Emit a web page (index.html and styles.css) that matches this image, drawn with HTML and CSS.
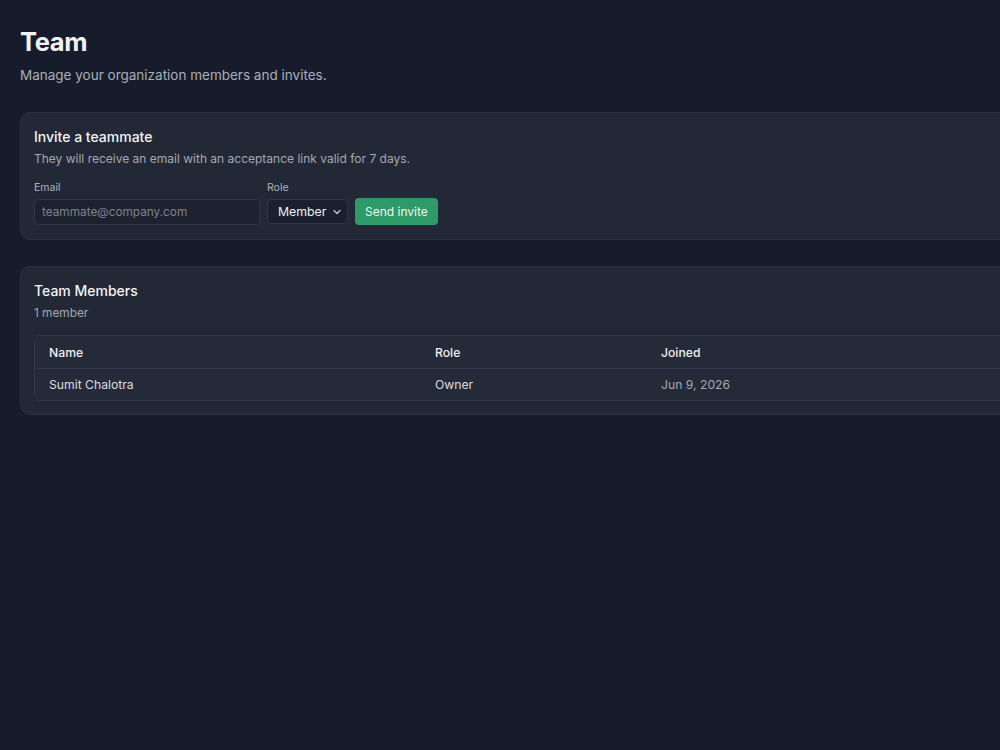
FILE: index.html
```html
<!DOCTYPE html>
<html lang="en">
<head>
  <meta charset="UTF-8" />
  <meta name="viewport" content="width=device-width, initial-scale=1" />
  <title>Team</title>
  <link rel="stylesheet" href="styles.css">
</head>
<body>
  <div class="page">
    <h1>Team</h1>
    <p class="subtitle">Manage your organization members and invites.</p>

    <section class="card">
      <h3>Invite a teammate</h3>
      <p class="muted">They will receive an email with an acceptance link valid for 7 days.</p>
      <form class="invite-form">
        <div class="field field-email">
          <label>Email</label>
          <input type="email" name="email" placeholder="teammate@company.com" />
        </div>
        <div class="field">
          <label>Role</label>
          <div class="select">
            <span>Member</span>
            <svg width="10" height="10" viewBox="0 0 10 10"><path d="M2 3.5 L5 6.5 L8 3.5" fill="none" stroke="#c7ccd4" stroke-width="1.2" stroke-linecap="round" stroke-linejoin="round"/></svg>
          </div>
        </div>
        <button type="submit" class="btn-send">Send invite</button>
      </form>
    </section>

    <section class="card members">
      <h3>Team Members</h3>
      <p class="muted count">1 member</p>
      <div class="table-wrap">
        <table>
          <colgroup>
            <col class="col-name">
            <col class="col-role">
            <col>
          </colgroup>
          <thead>
            <tr><th>Name</th><th>Role</th><th>Joined</th></tr>
          </thead>
          <tbody>
            <tr><td>Sumit Chalotra</td><td>Owner</td><td class="date">Jun 9, 2026</td></tr>
          </tbody>
        </table>
      </div>
    </section>
  </div>
</body>
</html>
```

FILE: styles.css
```css
body {
  margin: 0;
  background: #161c2c;
  color: #f1f3f6;
  font-family: Inter, "Noto Sans", sans-serif;
  overflow: hidden;
}
.page {
  width: 1152px;
  padding: 26px 20px 40px;
}
h1 {
  margin: 0;
  font-size: 25.5px;
  font-weight: 700;
  letter-spacing: -0.3px;
  line-height: 32px;
}
.subtitle {
  margin: 7px 0 0;
  font-size: 13.5px;
  color: #a9aeb7;
  line-height: 20px;
}
.card {
  margin-top: 27px;
  background: #222836;
  border: 1px solid #2a303e;
  border-radius: 10px;
  padding: 14px 13px 15px;
}
.card + .card {
  margin-top: 26px;
}
.card.members {
  padding-bottom: 13px;
}
h3 {
  margin: 0;
  font-size: 14px;
  font-weight: 500;
  line-height: 20px;
}
.muted {
  margin: 3px 0 0;
  font-size: 12px;
  color: #a3a8b1;
  line-height: 18px;
}
.invite-form {
  display: flex;
  align-items: flex-end;
  gap: 7px;
  margin-top: 13px;
}
.field label {
  display: block;
  font-size: 10.5px;
  color: #aeb3bb;
  margin-bottom: 4px;
  line-height: 14px;
}
input {
  box-sizing: border-box;
  width: 226px;
  height: 26px;
  margin-bottom: -1px;
  padding: 0 7px;
  background: #1d2230;
  border: 1px solid #2f3545;
  border-radius: 4px;
  color: #f1f3f6;
  font-family: inherit;
  font-size: 11.8px;
}
input::placeholder {
  color: #7d838d;
}
.select {
  box-sizing: border-box;
  width: 81px;
  height: 25px;
  display: flex;
  align-items: center;
  justify-content: space-between;
  padding: 0 5px 0 10px;
  background: #1b2030;
  border: 1px solid #2f3545;
  border-radius: 4px;
  font-size: 12.3px;
  color: #eef0f3;
}
.btn-send {
  height: 27px;
  padding: 0 10px;
  margin-bottom: -1px;
  background: #2e9a68;
  border: none;
  border-radius: 4px;
  color: #eef7f2;
  font-family: inherit;
  font-size: 12px;
  cursor: pointer;
}
.count {
  margin-top: 3px;
  font-size: 11.8px;
}
.table-wrap {
  margin-top: 13px;
  border: 1px solid #30364a;
  border-radius: 6px;
  overflow: hidden;
}
table {
  width: 100%;
  border-collapse: collapse;
  table-layout: fixed;
  background: #252a38;
}
.col-name { width: 386px; }
.col-role { width: 226px; }
th, td {
  text-align: left;
  padding: 0 14px;
  font-size: 12.2px;
  height: 31px;
}
th {
  height: 32px;
  font-weight: 500;
  color: #eef0f3;
  border-bottom: 1px solid #31374a;
}
td {
  color: #dadde2;
}
td.date {
  color: #a3a8b1;
}
```
